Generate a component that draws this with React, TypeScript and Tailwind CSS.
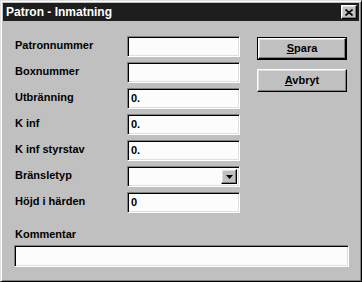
const sunken =
  "border border-t-[#808080] border-l-[#808080] border-r-white border-b-white shadow-[inset_1px_1px_0_#000,inset_-1px_-1px_0_#dfdfdf] bg-[#fcfcfc]";

const raised =
  "border border-t-white border-l-white border-r-black border-b-black shadow-[inset_-1px_-1px_0_#808080,inset_1px_1px_0_#dfdfdf] bg-[#c0c0c0]";

const fields = [
  { label: "Patronnummer", value: "" },
  { label: "Boxnummer", value: "" },
  { label: "Utbränning", value: "0." },
  { label: "K inf", value: "0." },
  { label: "K inf styrstav", value: "0." },
  { label: "Bränsletyp", value: "", combo: true },
  { label: "Höjd i härden", value: "0" },
];

const Field = ({ label, value, combo }: { label: string; value: string; combo?: boolean }) => (
  <div className="flex items-center h-[21px]">
    <div className="w-[112px] -mt-[2px]">{label}</div>
    <div className={`${sunken} w-[113px] h-[21px] flex items-center pl-[3px] pr-[2px]`}>
      <span className="flex-1">{value}</span>
      {combo && (
        <div className={`${raised} w-[16px] h-[15px] flex items-center justify-center`}>
          <svg width="7" height="4" viewBox="0 0 7 4">
            <path d="M0 0h7L3.5 4z" fill="#000" />
          </svg>
        </div>
      )}
    </div>
  </div>
);

export default function App() {
  return (
    <div
      className="w-[362px] h-[282px] bg-[#c0c0c0] border border-t-[#dfdfdf] border-l-[#dfdfdf] border-r-black border-b-black shadow-[inset_1px_1px_0_#fff,inset_-1px_-1px_0_#808080] p-[2px] flex flex-col text-[11px] font-bold text-black"
      style={{ fontFamily: '"Liberation Sans", Arial, sans-serif' }}
    >
      <div className="h-[18px] bg-[#1e1e1e] flex items-center justify-between pl-[3px] pr-[2px]">
        <span className="text-white text-[12px]">Patron - Inmatning</span>
        <div className={`${raised} w-[16px] h-[14px] flex items-center justify-center`}>
          <svg width="8" height="7" viewBox="0 0 8 7">
            <path d="M0.5 0.5L7.5 6.5M7.5 0.5L0.5 6.5" stroke="#000" strokeWidth="1.6" />
          </svg>
        </div>
      </div>

      <div className="flex pl-[12px] pt-[15px]">
        <div className="flex flex-col gap-[5px]">
          {fields.map((f) => (
            <Field key={f.label} {...f} />
          ))}
        </div>
        <div className="ml-[17px] pt-[1px] flex flex-col gap-[9px]">
          <button className="w-[90px] h-[23px] border border-black">
            <div className={`${raised} w-full h-full flex items-center justify-center`}>
              <span><u>S</u>para</span>
            </div>
          </button>
          <button className={`${raised} w-[90px] h-[23px] flex items-center justify-center`}>
            <span><u>A</u>vbryt</span>
          </button>
        </div>
      </div>

      <div className="pl-[12px] mt-[14px] h-[14px] flex items-center">Kommentar</div>
      <div className={`${sunken} ml-[11px] mt-[4px] w-[335px] h-[22px]`} />
    </div>
  );
}
